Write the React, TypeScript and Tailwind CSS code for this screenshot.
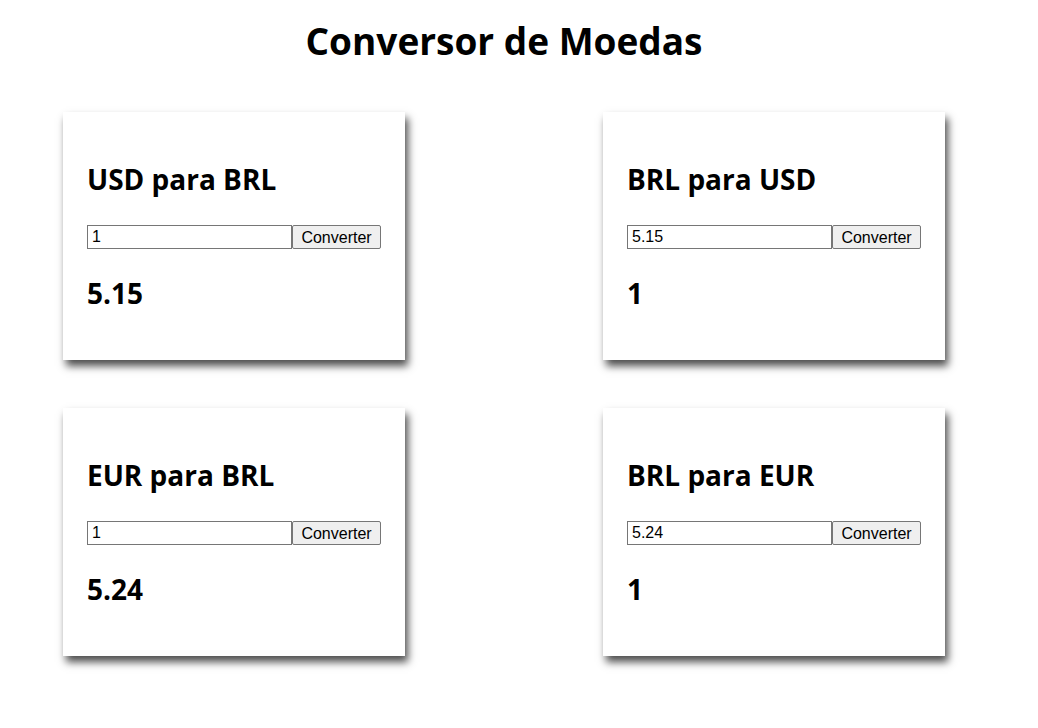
const pairs = [
  { title: "USD para BRL", value: "1", result: "5.15" },
  { title: "BRL para USD", value: "5.15", result: "1" },
  { title: "EUR para BRL", value: "1", result: "5.24" },
  { title: "BRL para EUR", value: "5.24", result: "1" },
];

function ConverterCard({ title, value, result }: { title: string; value: string; result: string }) {
  return (
    <div className="w-[342px] h-[248px] bg-white px-[24px] pt-[50px] shadow-[3px_6px_8px_rgba(0,0,0,0.7)]">
      <h2 className="text-[28px] leading-[34px] font-bold text-black">{title}</h2>
      <div className="flex mt-[29px]">
        <input
          className="w-[205px] h-[24px] border border-[#767676] bg-white px-[4px] text-[16px] text-black outline-none"
          style={{ fontFamily: '"Liberation Sans", Arial, sans-serif' }}
          type="text"
          defaultValue={value}
        />
        <button
          className="w-[89px] h-[24px] border border-[#767676] rounded-[2px] bg-[#efefef] text-[16px] text-black"
          style={{ fontFamily: '"Liberation Sans", Arial, sans-serif' }}
        >
          Converter
        </button>
      </div>
      <h2 className="text-[28px] leading-[34px] font-bold text-black mt-[27px]">{result}</h2>
    </div>
  );
}

export default function App() {
  return (
    <div
      className="w-[1038px] h-[728px] bg-white"
      style={{ fontFamily: '"Open Sans", "Noto Sans", sans-serif' }}
    >
      <div className="w-[1008px]">
        <h1 className="text-center text-[37px] leading-[42px] font-bold text-black pt-[20px]">
          Conversor de Moedas
        </h1>
        <div className="grid grid-cols-[342px_342px] justify-center gap-x-[198px] gap-y-[48px] mt-[50px]">
          {pairs.map((p, i) => (
            <ConverterCard key={i} {...p} />
          ))}
        </div>
      </div>
    </div>
  );
}
